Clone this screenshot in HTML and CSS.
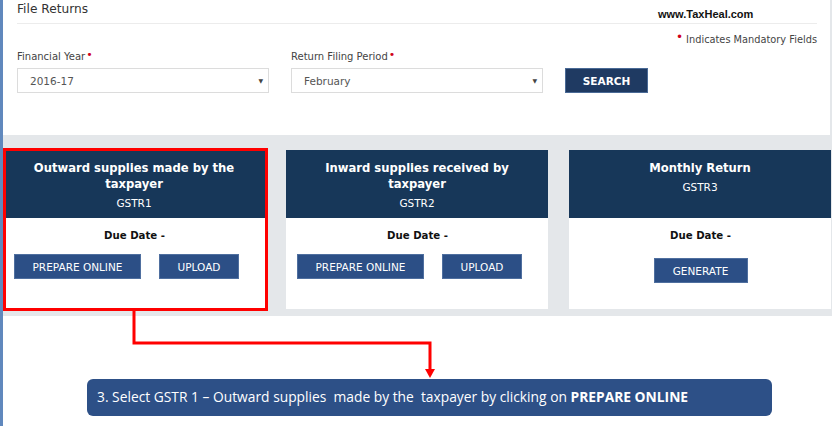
FILE: index.html
```html
<!DOCTYPE html>
<html lang="en">
<head>
<meta charset="utf-8">
<title>File Returns</title>
<link rel="stylesheet" href="styles.css">
</head>
<body>
<div class="page">
  <div class="strip"></div>
  <div class="main">
    <section class="top">
      <h1 class="title">File Returns</h1>
      <div class="watermark">www.TaxHeal.com</div>
      <div class="mandatory"><span class="req">&#8226;</span> Indicates Mandatory Fields</div>
      <div class="form-row">
        <div class="field">
          <label class="label">Financial Year<span class="req">&#8226;</span></label>
          <div class="select"><span>2016-17</span><span class="caret">&#9660;</span></div>
        </div>
        <div class="field">
          <label class="label">Return Filing Period<span class="req">&#8226;</span></label>
          <div class="select"><span>February</span><span class="caret">&#9660;</span></div>
        </div>
        <button class="search">SEARCH</button>
      </div>
    </section>

    <section class="tiles">
      <div class="card">
        <div class="card-head">
          <div class="card-title">Outward supplies made by the taxpayer</div>
          <div class="card-sub">GSTR1</div>
        </div>
        <div class="card-body">
          <div class="due">Due Date -</div>
          <div class="actions">
            <button class="btn btn-wide">PREPARE ONLINE</button>
            <button class="btn btn-up">UPLOAD</button>
          </div>
        </div>
      </div>
      <div class="card">
        <div class="card-head">
          <div class="card-title">Inward supplies received by taxpayer</div>
          <div class="card-sub">GSTR2</div>
        </div>
        <div class="card-body">
          <div class="due">Due Date -</div>
          <div class="actions">
            <button class="btn btn-wide">PREPARE ONLINE</button>
            <button class="btn btn-up">UPLOAD</button>
          </div>
        </div>
      </div>
      <div class="card">
        <div class="card-head">
          <div class="card-title">Monthly Return</div>
          <div class="card-sub">GSTR3</div>
        </div>
        <div class="card-body">
          <div class="due">Due Date -</div>
          <div class="actions centered">
            <button class="btn btn-gen">GENERATE</button>
          </div>
        </div>
      </div>
      <div class="highlight"></div>
    </section>

    <section class="note-area">
      <div class="callout">3. Select GSTR 1 &ndash; Outward supplies&nbsp; made by the&nbsp; taxpayer by clicking on <b>PREPARE ONLINE</b></div>
    </section>

    <svg class="connector" width="832" height="426" viewBox="0 0 832 426" aria-hidden="true">
      <polyline points="131,311 131,343 427,343 427,370" fill="none" stroke="#ff0000" stroke-width="3"/>
      <polygon points="422,369 432,369 427,378" fill="#ff0000"/>
    </svg>
  </div>
</div>
</body>
</html>
```

FILE: styles.css
```css
* { box-sizing: border-box; }
html, body { margin: 0; padding: 0; }
body {
  width: 832px;
  height: 426px;
  overflow: hidden;
  background: #ffffff;
  font-family: "DejaVu Sans", Verdana, sans-serif;
}
.page {
  display: flex;
  height: 426px;
}
.strip {
  width: 3px;
  flex: none;
  background: #6088bd;
}
.main {
  position: relative;
  flex: 1;
  min-width: 0;
  overflow: hidden;
}

/* top panel */
.top {
  position: relative;
  height: 135px;
  padding: 0 13px 0 14px;
  border-right: 2px solid #e4e7ea;
}
.title {
  margin: 0;
  height: 24px;
  line-height: 18px;
  font-size: 12.2px;
  font-weight: normal;
  color: #333;
  border-bottom: 1px solid #ececec;
}
.watermark {
  position: absolute;
  left: 655px;
  top: 8px;
  font-family: "Liberation Sans", Arial, sans-serif;
  font-size: 11px;
  color: #111;
  font-weight: bold;
}
.mandatory {
  text-align: right;
  font-size: 9.8px;
  color: #444;
  line-height: 14px;
  margin-top: 6px;
}
.req {
  color: #d0021b;
  font-size: 12px;
  vertical-align: 2px;
  margin-left: 1px;
}
.form-row {
  display: flex;
  align-items: flex-end;
  margin-top: 1px;
}
.field {
  width: 252px;
  margin-right: 22px;
}
.label {
  display: block;
  font-size: 10px;
  color: #444;
  line-height: 14px;
  margin-bottom: 4px;
}
.label .req { font-size: 11px; }
.select {
  height: 25px;
  border: 1px solid #dcdcdc;
  display: flex;
  align-items: center;
  justify-content: space-between;
  padding: 0 5px 0 12px;
  font-size: 10.5px;
  color: #555;
  background: #fff;
}
.caret {
  font-size: 6px;
  color: #444;
}
.search {
  width: 83px;
  height: 25px;
  background: #1f3a62;
  color: #fff;
  border: 1px solid #4a6a96;
  font-family: "DejaVu Sans", Verdana, sans-serif;
  font-size: 10.5px;
  font-weight: bold;
  padding: 0;
}

/* tiles */
.tiles {
  position: relative;
  height: 181px;
  background: #e4e7ea;
  padding: 15px 0 0 0;
  display: grid;
  grid-template-columns: 262px 262px 262px;
  column-gap: 21px;
  align-items: start;
}
.card {
  height: 159px;
  background: #fff;
  display: flex;
  flex-direction: column;
}
.card-head {
  height: 68px;
  background: #173759;
  color: #fff;
  text-align: center;
  padding: 10px 12px 0;
}
.card-title {
  font-size: 11.6px;
  font-weight: bold;
  line-height: 16px;
}
.card-sub {
  font-size: 10.5px;
  line-height: 16px;
  margin-top: 3px;
}
.card-body {
  flex: 1;
  padding: 10px 10px 0 11px;
}
.due {
  text-align: center;
  font-size: 10.2px;
  font-weight: bold;
  color: #111;
  line-height: 16px;
}
.actions {
  display: flex;
  gap: 18px;
  margin-top: 10px;
}
.actions.centered {
  justify-content: center;
  margin-top: 14px;
}
.btn {
  height: 25px;
  background: #2c4f86;
  color: #fff;
  border: 1px solid #4f6f9f;
  font-family: "DejaVu Sans", Verdana, sans-serif;
  font-size: 10.5px;
  padding: 0;
}
.btn-wide { width: 127px; }
.btn-up { width: 80px; }
.btn-gen { width: 94px; }
.highlight {
  position: absolute;
  left: 0;
  top: 13px;
  width: 265px;
  height: 163px;
  border: 3px solid #ff0000;
}

/* callout */
.note-area {
  padding: 63px 0 0 84px;
}
.callout {
  width: 685px;
  height: 37px;
  background: #2d5087;
  border-radius: 6px;
  color: #fff;
  font-family: "Open Sans", "Noto Sans", sans-serif;
  font-size: 13.8px;
  line-height: 36px;
  padding: 0 0 0 10px;
  white-space: nowrap;
}
.callout b { font-weight: bold; }

.connector {
  position: absolute;
  left: 0;
  top: 0;
  pointer-events: none;
}
```
